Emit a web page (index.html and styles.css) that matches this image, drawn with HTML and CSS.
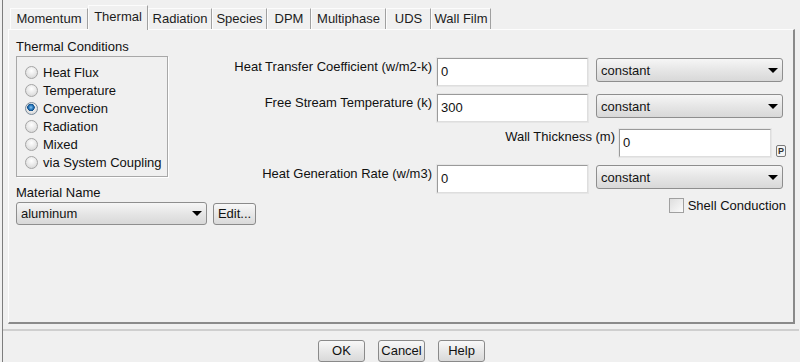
FILE: index.html
```html
<!DOCTYPE html>
<html lang="en">
<head>
    <meta charset="UTF-8">
    <title>Wall - Thermal</title>
    <link rel="stylesheet" href="styles.css">
</head>
<body>
    <div class="dialog">
        <div class="tabs">
            <div class="tab">Momentum</div>
            <div class="tab active">Thermal</div>
            <div class="tab">Radiation</div>
            <div class="tab">Species</div>
            <div class="tab">DPM</div>
            <div class="tab">Multiphase</div>
            <div class="tab">UDS</div>
            <div class="tab">Wall Film</div>
        </div>

        <div class="panel">
            <div class="left">
                <div class="caption">Thermal Conditions</div>
                <div class="group">
                    <div class="radio-row"><span class="radio"></span>Heat Flux</div>
                    <div class="radio-row"><span class="radio"></span>Temperature</div>
                    <div class="radio-row"><span class="radio checked"></span>Convection</div>
                    <div class="radio-row"><span class="radio"></span>Radiation</div>
                    <div class="radio-row"><span class="radio"></span>Mixed</div>
                    <div class="radio-row"><span class="radio"></span>via System Coupling</div>
                </div>
                <div class="caption material-caption">Material Name</div>
                <div class="material-row">
                    <div class="select material-select"><span>aluminum</span><span class="arrow"></span></div>
                    <div class="button edit-button">Edit...</div>
                </div>
            </div>

            <div class="right">
                <div class="field-row">
                    <span class="field-label">Heat Transfer Coefficient (w/m2-k)</span>
                    <div class="input">0</div>
                    <div class="select"><span>constant</span><span class="arrow"></span></div>
                </div>
                <div class="field-row row-gap">
                    <span class="field-label">Free Stream Temperature (k)</span>
                    <div class="input">300</div>
                    <div class="select"><span>constant</span><span class="arrow"></span></div>
                </div>
                <div class="field-row wall-row">
                    <span class="field-label">Wall Thickness (m)</span>
                    <div class="input wall-input">0</div>
                    <div class="param-button">P</div>
                </div>
                <div class="field-row row-gap">
                    <span class="field-label">Heat Generation Rate (w/m3)</span>
                    <div class="input">0</div>
                    <div class="select"><span>constant</span><span class="arrow"></span></div>
                </div>
                <div class="check-row">
                    <span class="checkbox"></span>Shell Conduction
                </div>
            </div>
        </div>

        <div class="separator"></div>

        <div class="actions">
            <div class="button action-button">OK</div>
            <div class="button action-button">Cancel</div>
            <div class="button action-button">Help</div>
        </div>
    </div>
</body>
</html>
```

FILE: styles.css
```css
body {
    font-family: "Liberation Sans", Arial, sans-serif;
    font-size: 13px;
    margin: 0;
    padding: 0;
    background-color: #f0f0f0;
    color: #111;
}
.dialog {
    margin-left: 2px;
    height: 362px;
    border-left: 1px solid #7d7d7d;
    overflow: hidden;
}

/* tabs */
.tabs {
    display: flex;
    align-items: flex-end;
    height: 24px;
    padding: 5px 0 0 7px;
}
.tab {
    box-sizing: border-box;
    height: 21px;
    line-height: 19px;
    text-align: center;
    color: #1c1c1c;
    border-top: 1px solid #fcfcfc;
    border-left: 1px solid #fcfcfc;
    border-right: 1px solid #a0a0a0;
}
.tab:nth-child(1) { width: 78px; }
.tab:nth-child(2) { width: 60px; }
.tab:nth-child(3) { width: 64px; }
.tab:nth-child(4) { width: 55px; }
.tab:nth-child(5) { width: 44px; }
.tab:nth-child(6) { width: 75px; }
.tab:nth-child(7) { width: 45px; }
.tab:nth-child(8) { width: 60px; }
.tab.active {
    position: relative;
    height: 25px;
    margin-bottom: -1px;
    line-height: 21px;
    background-color: #f0f0f0;
    z-index: 1;
}

/* main panel */
.panel {
    box-sizing: border-box;
    display: flex;
    align-items: flex-start;
    width: 787px;
    height: 295px;
    margin-left: 5px;
    padding: 9px 6px 0 7px;
    border-top: 1px solid #fdfdfd;
    border-left: 1px solid #fdfdfd;
    border-right: 2px solid #8a8a8a;
    border-bottom: 2px solid #8a8a8a;
}
.left {
    flex: none;
}
.caption {
    line-height: 16px;
}
.group {
    box-sizing: border-box;
    width: 152px;
    height: 121px;
    margin-top: 1px;
    padding: 6px 0 0 8px;
    border: 1px solid #a8a8a8;
    box-shadow: 1px 1px 0 #fff;
}
.radio-row {
    display: flex;
    align-items: center;
    height: 18px;
}
.radio {
    box-sizing: border-box;
    width: 13px;
    height: 13px;
    margin-right: 5px;
    border: 1px solid #a4a4a4;
    border-radius: 50%;
    background: radial-gradient(circle at 50% 35%, #ffffff 0, #e6e6e6 55%, #cfcfcf 100%);
}
.radio.checked {
    border-color: #7a8a9a;
    background:
        radial-gradient(circle at 45% 40%, #8cc8f4 0, #2f7fc2 2px, #0f4c86 3.5px, transparent 4px),
        radial-gradient(circle at 50% 35%, #ffffff 0, #e6e6e6 55%, #cfcfcf 100%);
}
.material-caption {
    margin-top: 8px;
}
.material-row {
    display: flex;
    align-items: center;
    gap: 6px;
    margin-top: 1px;
}

/* controls */
.select {
    box-sizing: border-box;
    display: flex;
    align-items: center;
    justify-content: space-between;
    flex: none;
    width: 187px;
    height: 24px;
    padding: 0 3px 0 4px;
    border: 1px solid #8e8e8e;
    border-radius: 3px;
    background: linear-gradient(#f6f6f6, #e6e6e6 50%, #d8d8d8);
    color: #141414;
}
.material-select {
    width: 191px;
    height: 23px;
}
.arrow {
    width: 0;
    height: 0;
    margin-right: 1px;
    border-left: 5px solid transparent;
    border-right: 5px solid transparent;
    border-top: 5px solid #000;
}
.button {
    box-sizing: border-box;
    height: 22px;
    line-height: 20px;
    text-align: center;
    border: 1px solid #8a8a8a;
    border-radius: 3px;
    background: linear-gradient(#f8f8f8, #e8e8e8 50%, #d9d9d9);
}
.edit-button {
    width: 43px;
}
.input {
    box-sizing: border-box;
    flex: none;
    width: 151px;
    height: 28px;
    padding: 5px 0 0 3px;
    line-height: 16px;
    background-color: #fff;
    border-top: 1px solid #9a9a9a;
    border-left: 1px solid #9a9a9a;
    border-right: 1px solid #dedede;
    border-bottom: 1px solid #dedede;
    box-shadow: 0 0 0 1px #e6e6e6;
}
.wall-input {
    width: 152px;
}

/* right column */
.right {
    flex: 1;
    min-width: 0;
    margin-top: 19px;
}
.field-row {
    display: flex;
    justify-content: flex-end;
    align-items: flex-start;
    margin-right: 4px;
}
.field-row .input {
    margin-left: 5px;
    margin-right: 8px;
}
.field-label {
    flex: none;
    white-space: nowrap;
    padding-top: 1px;
    line-height: 16px;
}
.row-gap {
    margin-top: 8px;
}
.wall-row {
    margin-top: 7px;
    margin-right: 1px;
}
.wall-row .input {
    margin-left: 4px;
    margin-right: 5px;
}
.wall-row .field-label {
    padding-top: 0;
}
.param-button {
    box-sizing: border-box;
    align-self: flex-end;
    width: 10px;
    height: 12px;
    line-height: 10px;
    font-size: 9px;
    font-weight: bold;
    text-align: center;
    color: #333;
    border: 1px solid #7a7a7a;
    border-radius: 2px;
    background-color: #f4f4f4;
}
.check-row {
    display: flex;
    justify-content: flex-end;
    align-items: center;
    height: 15px;
    margin-top: 5px;
    margin-right: 1px;
}
.checkbox {
    box-sizing: border-box;
    width: 15px;
    height: 15px;
    margin-right: 4px;
    border: 1px solid #a0a0a0;
    background: linear-gradient(135deg, #dedede, #fbfbfb);
}

/* bottom bar */
.separator {
    height: 2px;
    margin: 5px 1px 0 0;
    background-color: #cfcfcf;
}
.actions {
    display: flex;
    justify-content: center;
    gap: 13px;
    margin-top: 9px;
}
.action-button {
    width: 47px;
}
```
